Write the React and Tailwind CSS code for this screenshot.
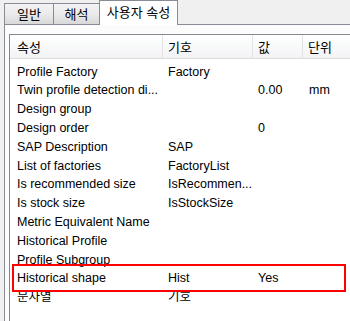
const rows = [
  ['Profile Factory', 'Factory', '', ''],
  ['Twin profile detection di...', '', '0.00', 'mm'],
  ['Design group', '', '', ''],
  ['Design order', '', '0', ''],
  ['SAP Description', 'SAP', '', ''],
  ['List of factories', 'FactoryList', '', ''],
  ['Is recommended size', 'IsRecommen...', '', ''],
  ['Is stock size', 'IsStockSize', '', ''],
  ['Metric Equivalent Name', '', '', ''],
  ['Historical Profile', '', '', ''],
  ['Profile Subgroup', '', '', ''],
  ['Historical shape', 'Hist', 'Yes', ''],
  ['문자열', '기호', '', ''],
]

function Tab({ label, active, className }) {
  if (active) {
    return (
      <div className={`relative z-10 h-[25px] border border-b-0 border-[#898c95] bg-white flex items-center justify-center pb-[1px] ${className}`}>
        {label}
      </div>
    )
  }
  return (
    <div className={`h-[22px] border border-[#898c95] bg-linear-to-b from-[#f3f3f3] via-[#ebebeb] to-[#d8d8d8] flex items-center justify-center pt-[1px] ${className}`}>
      {label}
    </div>
  )
}

export default function App() {
  return (
    <div className="relative w-[350px] h-[321px] overflow-hidden bg-[#f0f0f0] text-[12.5px] leading-none text-black font-['Liberation_Sans','Noto_Sans_CJK_KR',sans-serif]">
      {/* 탭 */}
      <div className="flex items-end h-[25px] pl-[4px] text-[13px]">
        <Tab label="일반" className="w-[50px]" />
        <Tab label="해석" className="w-[47px] -ml-px" />
        <Tab label="사용자 속성" active className="w-[79px] -ml-[1px]" />
      </div>

      {/* 패널 */}
      <div className="-mt-px ml-[4px] h-[297px] border-t border-l border-[#898c95] bg-[#fcfcfc] pl-[4px] pt-[9px]">
        <div className="h-full border-t border-l border-[#828790] bg-white">
          <div className="flex h-[24px] border-b border-[#dcdcdc] bg-linear-to-b from-white to-[#f2f3f5] text-[13px]">
            <div className="w-[153px] pl-[7px] pt-[1px] flex items-center border-r border-[#e3e3e3]">속성</div>
            <div className="w-[90px] pl-[5px] pt-[1px] flex items-center border-r border-[#e3e3e3]">기호</div>
            <div className="w-[50px] pl-[5px] pt-[1px] flex items-center border-r border-[#e3e3e3]">값</div>
            <div className="pl-[5px] pt-[1px] flex items-center">단위</div>
          </div>
          <div className="pt-[3.6px]">
            {rows.map((r, i) => (
              <div key={i} className="flex h-[18.8px] leading-[18.8px] whitespace-nowrap">
                <div className="w-[153px] pl-[7px]">{r[0]}</div>
                <div className="w-[90px] pl-[5px]">{r[1]}</div>
                <div className="w-[50px] pl-[5px]">{r[2]}</div>
                <div className="pl-[6px]">{r[3]}</div>
              </div>
            ))}
          </div>
        </div>
      </div>

      {/* 강조 박스 */}
      <div className="absolute left-[12px] top-[264px] w-[334px] h-[28px] border-2 border-[#ff0000]" />
    </div>
  )
}
